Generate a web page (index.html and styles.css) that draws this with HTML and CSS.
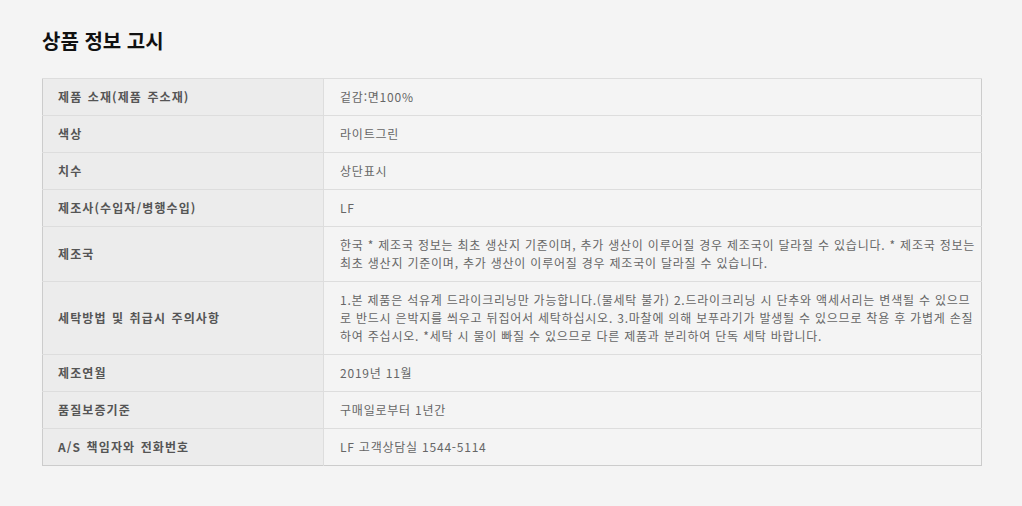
FILE: index.html
```html
<!DOCTYPE html>
<html lang="ko">
<head>
<meta charset="utf-8">
<link rel="stylesheet" href="styles.css">
</head>
<body>
<div class="page">
  <h1 class="title">상품 정보 고시</h1>
  <table class="notice">
    <tr><th>제품 소재(제품 주소재)</th><td>겉감:면100%</td></tr>
    <tr><th>색상</th><td>라이트그린</td></tr>
    <tr><th>치수</th><td>상단표시</td></tr>
    <tr><th>제조사(수입자/병행수입)</th><td>LF</td></tr>
    <tr><th>제조국</th><td>한국 * 제조국 정보는 최초 생산지 기준이며, 추가 생산이 이루어질 경우 제조국이 달라질 수 있습니다. * 제조국 정보는 최초 생산지 기준이며, 추가 생산이 이루어질 경우 제조국이 달라질 수 있습니다.</td></tr>
    <tr><th>세탁방법 및 취급시 주의사항</th><td>1.본 제품은 석유계 드라이크리닝만 가능합니다.(물세탁 불가) 2.드라이크리닝 시 단추와 액세서리는 변색될 수 있으므로 반드시 은박지를 씌우고 뒤집어서 세탁하십시오. 3.마찰에 의해 보푸라기가 발생될 수 있으므로 착용 후 가볍게 손질하여 주십시오. *세탁 시 물이 빠질 수 있으므로 다른 제품과 분리하여 단독 세탁 바랍니다.</td></tr>
    <tr><th>제조연월</th><td>2019년 11월</td></tr>
    <tr><th>품질보증기준</th><td>구매일로부터 1년간</td></tr>
    <tr><th>A/S 책임자와 전화번호</th><td>LF 고객상담실 1544-5114</td></tr>
  </table>
</div>
</body>
</html>
```
FILE: styles.css
```css
html, body {
  margin: 0;
  padding: 0;
  background: #f4f4f4;
}
body {
  font-family: "Noto Sans CJK KR", "Noto Sans", sans-serif;
  color: #666;
}
.page {
  padding: 28px 40px 0 42px;
}
.title {
  margin: 0 0 24px;
  font-size: 20px;
  line-height: 26px;
  font-weight: 700;
  color: #111;
}
.notice {
  width: 940px;
  border-collapse: collapse;
  border: 1px solid #cccccc;
  font-size: 12px;
  line-height: 18px;
}
.notice th,
.notice td {
  padding: 9px 15px 9px 15px;
  border-top: 1px solid #dddddd;
  vertical-align: middle;
  text-align: left;
}
.notice th {
  width: 250px;
  background: #ececec;
  color: #555;
  font-weight: 700;
  letter-spacing: 1.1px;
  word-spacing: 1px;
  border-right: 1px solid #dddddd;
}
.notice td {
  padding-left: 16px;
  padding-right: 2px;
  background: #f4f4f4;
  color: #666;
  letter-spacing: 0.78px;
  word-spacing: 0;
  word-break: break-all;
}
```
